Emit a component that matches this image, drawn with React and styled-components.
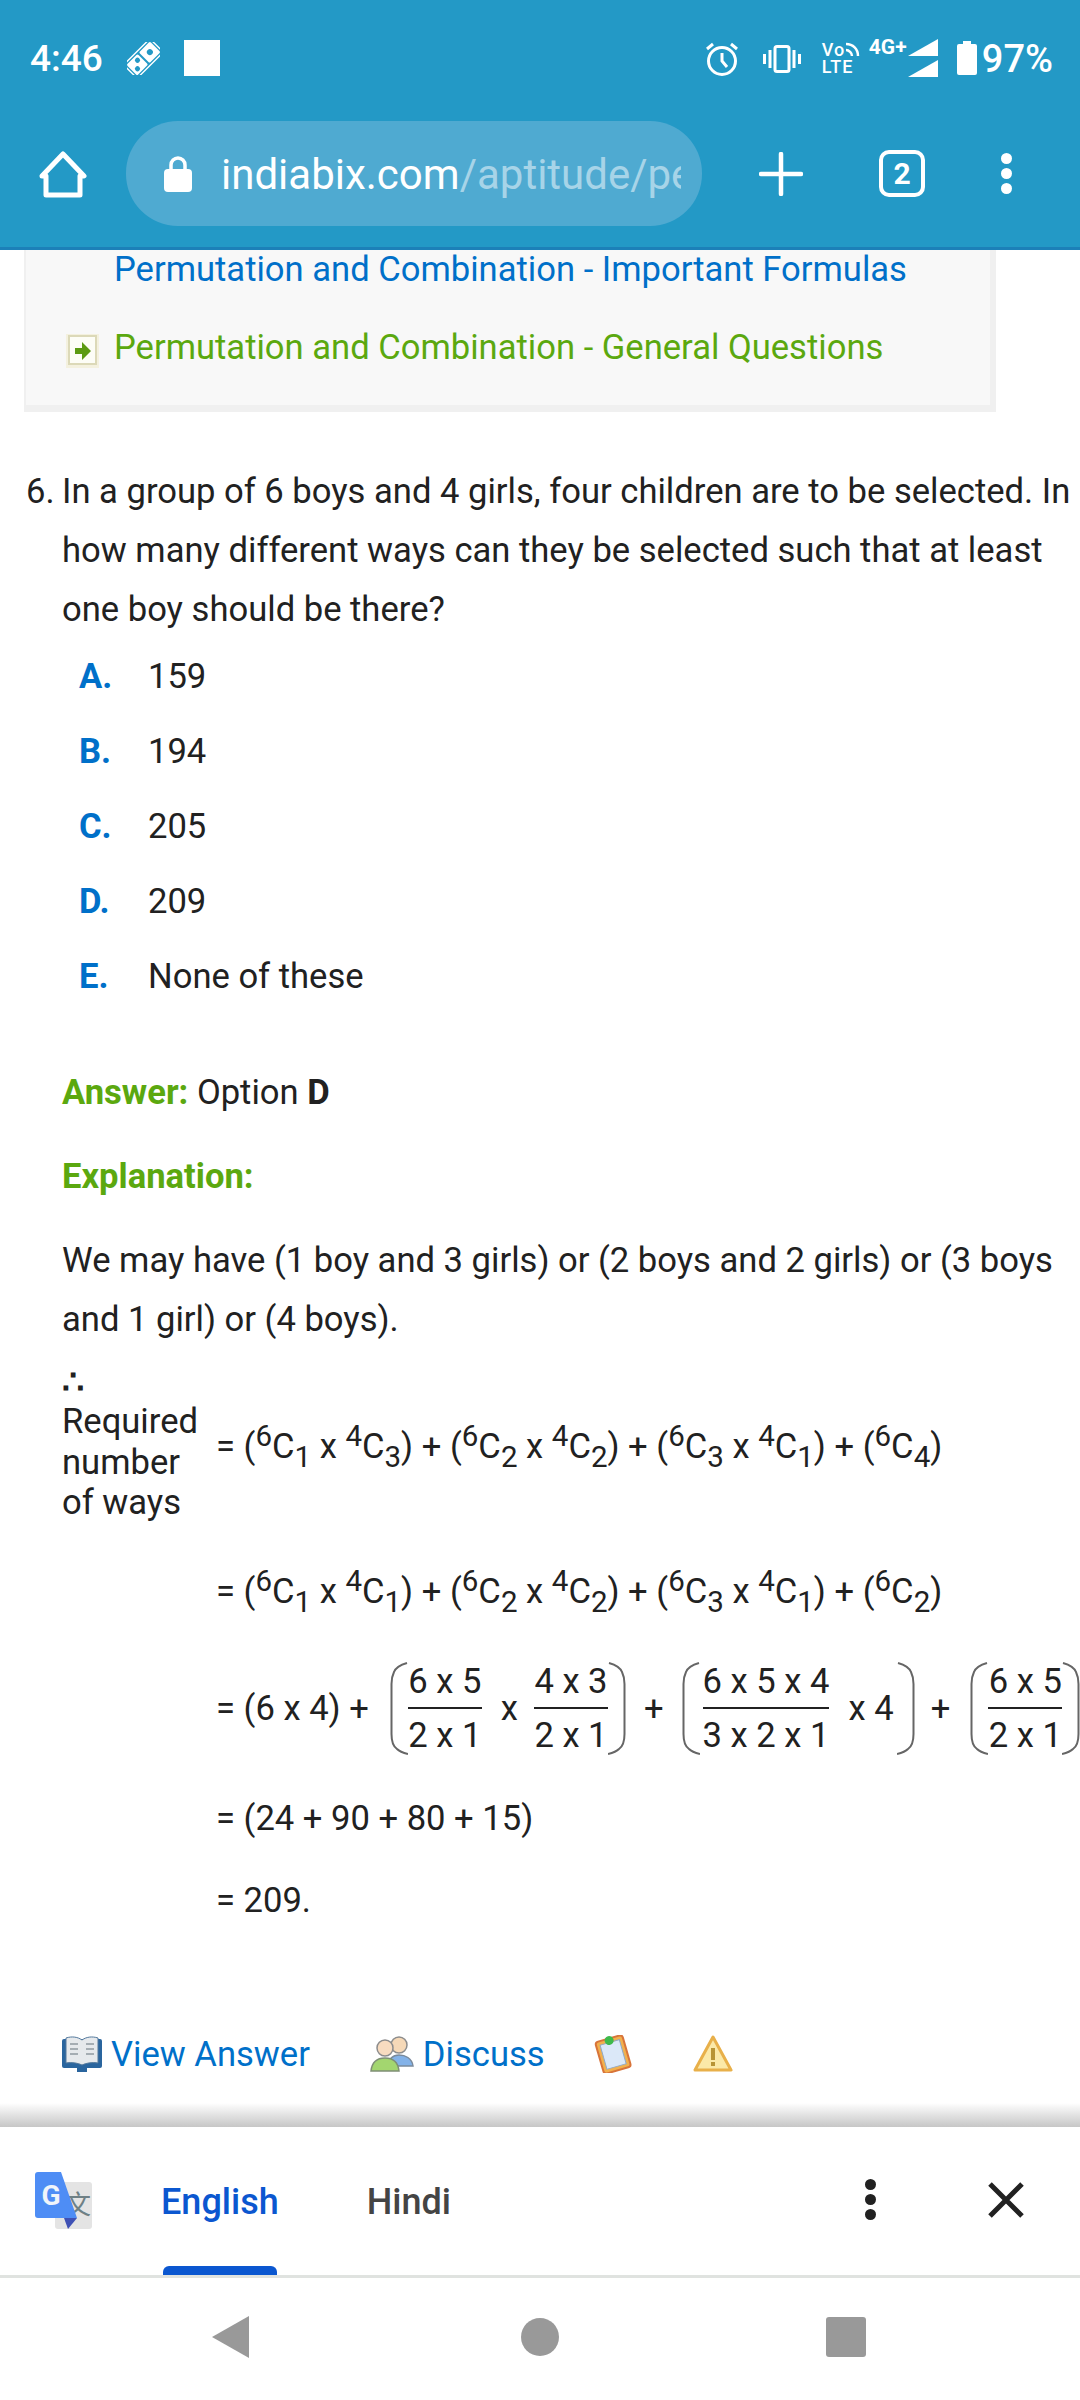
import React from "react"
import styled, { createGlobalStyle } from "styled-components"

const GlobalStyle = createGlobalStyle`
    html, body {
        margin: 0;
        padding: 0;
        background: #fff;
    }
    body {
        font-family: Roboto, "Liberation Sans", sans-serif;
    }
`

const Screen = styled.div`
    width: 1080px;
    height: 2400px;
    display: flex;
    flex-direction: column;
    overflow: hidden;
    background: #fff;
    color: #212121;
`

const TopBar = styled.header`
    height: 250px;
    flex: none;
    box-sizing: border-box;
    background: #2399c6;
    border-bottom: 3px solid #1c80b8;
    display: flex;
    flex-direction: column;
`

const StatusRow = styled.div`
    height: 121px;
    display: flex;
    align-items: flex-start;
    padding: 39px 27px 0 30px;
    box-sizing: border-box;
    color: #fff;
`

const Clock = styled.span`
    font-size: 37px;
    font-weight: 500;
    line-height: 40px;
    width: 97px;
`

const StatusBlock = styled.span`
    width: 36px;
    height: 36px;
    background: #fff;
    margin: 1px 0 0 24px;
`

const StatusRight = styled.div`
    margin-left: auto;
    display: flex;
    align-items: flex-start;
`

const VoLte = styled.span`
    width: 38px;
    margin-left: 21px;
    margin-top: 2px;
    font-size: 18px;
    font-weight: 500;
    line-height: 17px;
    letter-spacing: 1px;
    position: relative;
    display: block;
`

const WifiArc = styled.svg`
    position: absolute;
    right: 0;
    top: 1px;
`

const FourG = styled.span`
    font-size: 21px;
    font-weight: 700;
    line-height: 24px;
    margin-left: 9px;
    margin-top: -4px;
    width: 40px;
`

const Percent = styled.span`
    font-size: 38px;
    font-weight: 500;
    line-height: 40px;
    margin-left: 5px;
`

const ToolRow = styled.div`
    height: 105px;
    display: flex;
    align-items: center;
    position: relative;
`

const ToolSlot = styled.div`
    flex: none;
    width: ${(p) => p.$w}px;
    display: flex;
    justify-content: center;
    align-items: center;
`

const UrlPill = styled.div`
    width: 576px;
    height: 105px;
    box-sizing: border-box;
    flex: none;
    border-radius: 52px;
    background: #4faad1;
    display: flex;
    align-items: center;
    padding: 0 21px 0 38px;
    overflow: hidden;
`

const UrlText = styled.div`
    margin-left: 29px;
    margin-top: 2px;
    flex: 1;
    min-width: 0;
    overflow: hidden;
    white-space: nowrap;
    font-size: 42px;
    color: #a7d4e8;
    span {
        color: #fff;
    }
`

const TabCount = styled.div`
    width: 46px;
    height: 47px;
    box-sizing: border-box;
    border: 4px solid #fff;
    border-radius: 10px;
    color: #fff;
    font-size: 30px;
    font-weight: 700;
    display: flex;
    align-items: center;
    justify-content: center;
`

const Dots = styled.div`
    display: flex;
    flex-direction: column;
    gap: 4px;
    i {
        display: block;
        width: 11px;
        height: 11px;
        border-radius: 50%;
        background: ${(p) => p.$color};
    }
`

const Content = styled.main`
    flex: 1;
    min-height: 0;
    overflow: hidden;
    font-size: 34.6px;
    line-height: 59px;
`

const TopicPanel = styled.nav`
    width: 972px;
    height: 162px;
    margin-left: 24px;
    box-sizing: border-box;
    background: #f8f8f8;
    border-left: 2px solid #f0f0f0;
    border-right: 6px solid #f0f0f0;
    border-bottom: 7px solid #f0f0f0;
    padding-left: 40px;
`

const TopicLink = styled.div`
    height: ${(p) => (p.$green ? "78px" : "38px")};
    line-height: ${(p) => (p.$green ? "78px" : "38px")};
    margin-top: ${(p) => (p.$green ? "20px" : "0")};
    color: ${(p) => (p.$green ? "#5ba80f" : "#0070c9")};
    display: flex;
    align-items: center;
    padding-left: ${(p) => (p.$green ? "0" : "48px")};
    gap: 14px;
`

const Question = styled.div`
    margin: 50px 0 0 26px;
    display: flex;
    white-space: nowrap;
`

const QuestionNo = styled.span`
    width: 36px;
    flex: none;
`

const Options = styled.ul`
    list-style: none;
    margin: 0;
    padding: 0 0 0 79px;
`

const Option = styled.li`
    height: 75px;
    line-height: 75px;
    display: flex;
`

const OptionKey = styled.b`
    width: 69px;
    font-weight: 700;
    color: #0070c9;
`

const Block = styled.div`
    margin: ${(p) => p.$top}px 0 0 62px;
    white-space: nowrap;
`

const GreenBold = styled.b`
    color: #5ba80f;
    font-weight: 700;
`

const MathGrid = styled.div`
    margin: 12px 0 0 62px;
    display: grid;
    grid-template-columns: 154px max-content;
    grid-template-rows: 170px 121px 112px 108px 57px;
    align-items: center;
    white-space: nowrap;
    sup, sub {
        font-size: 29.5px;
        line-height: 0;
    }
    sup {
        vertical-align: 12px;
    }
    sub {
        vertical-align: -9px;
    }
`

const Because = styled.div`
    line-height: 40.5px;
    grid-row: 1;
    white-space: normal;
    width: 150px;
    margin-bottom: 2px;
`

const BecauseMark = styled.div`
    line-height: 30px;
    margin-bottom: 4px;
    font-weight: 700;
`

const Expr = styled.div`
    grid-column: 2;
    display: flex;
    align-items: center;
`

const Fraction = styled.span`
    display: flex;
    flex-direction: column;
    align-items: stretch;
    text-align: center;
    line-height: 52px;
    width: ${(p) => p.$w}px;
    margin-left: ${(p) => p.$ml || 0}px;
    span + span {
        border-top: 2px solid #212121;
    }
`

const Gap = styled.span`
    width: ${(p) => p.$w}px;
    flex: none;
`

const ActionRow = styled.div`
    margin: 105px 0 0 62px;
    height: 40px;
    display: flex;
    align-items: center;
    color: #0070c9;
    line-height: 40px;
`

const ActionIcon = styled.svg`
    flex: none;
    margin-left: ${(p) => p.$ml || 0}px;
    margin-right: ${(p) => p.$mr || 0}px;
`

const TranslateBar = styled.section`
    position: relative;
    flex: none;
    height: 151px;
    box-sizing: border-box;
    border-bottom: 3px solid #e0e3e0;
    background: #fff;
    display: flex;
    align-items: flex-start;
    &::before {
        content: "";
        position: absolute;
        left: 0;
        right: 0;
        top: -24px;
        height: 24px;
        background: linear-gradient(to bottom, rgba(200, 200, 200, 0), #c6c6c6);
    }
`

const LangLogo = styled.svg`
    margin: 45px 0 0 35px;
    flex: none;
`

const LangTab = styled.div`
    position: relative;
    height: 148px;
    margin-left: ${(p) => p.$ml}px;
    padding-top: 53px;
    box-sizing: border-box;
    font-size: 36px;
    font-weight: 500;
    line-height: 44px;
    color: ${(p) => (p.$active ? "#0b57d0" : "#444")};
    ${(p) =>
        p.$active &&
        `&::after {
            content: "";
            position: absolute;
            left: 2px;
            right: 2px;
            bottom: 0;
            height: 9px;
            background: #0b57d0;
            border-radius: 6px 6px 0 0;
        }`}
`

const BarActions = styled.div`
    margin-left: auto;
    margin-top: 52px;
    display: flex;
    align-items: center;
    padding-right: 56px;
    gap: 112px;
`

const NavBar = styled.nav`
    flex: none;
    height: 122px;
    display: flex;
    align-items: center;
    position: relative;
`

const NavSlot = styled.div`
    position: absolute;
    left: ${(p) => p.$x}px;
    top: ${(p) => p.$y}px;
`

const NavTriangle = styled.svg`
    display: block;
`

const NavCircle = styled.div`
    width: 38px;
    height: 38px;
    background: #999;
    border-radius: 50%;
`

const NavSquare = styled.div`
    width: 40px;
    height: 40px;
    background: #999;
    border-radius: 3px;
`

function DominoIcon() {
    return (
        <svg width="33" height="33" viewBox="0 0 33 33" style={{ marginTop: 3, flex: "none" }}>
            <g transform="rotate(45 16.5 16.5)">
                <rect x="7" y="-2" width="19" height="37" rx="3" fill="none" stroke="#fff" strokeWidth="1.4" />
                <rect x="9" y="0" width="15" height="15.5" rx="1.5" fill="#fff" />
                <rect x="9" y="17.5" width="15" height="15.5" rx="1.5" fill="#fff" />
                <circle cx="16.5" cy="7.5" r="3" fill="#2399c6" />
                <circle cx="13.5" cy="22" r="2.6" fill="#2399c6" />
                <circle cx="19.5" cy="28" r="2.6" fill="#2399c6" />
            </g>
        </svg>
    )
}

function AlarmIcon() {
    return (
        <svg width="32" height="34" viewBox="0 0 32 34" fill="none" stroke="#fff" strokeWidth="3" style={{ marginTop: 3 }}>
            <circle cx="16" cy="19" r="13.5" />
            <path d="M16 11v8l5 6" />
            <path d="M1 7l6-5M31 7l-6-5" />
        </svg>
    )
}

function VibrateIcon() {
    return (
        <svg width="38" height="28" viewBox="0 0 38 28" fill="none" stroke="#fff" style={{ marginLeft: 25, marginTop: 6 }}>
            <rect x="12" y="1.5" width="14" height="25" rx="2" strokeWidth="3" />
            <path d="M7 5v18M31 5v18" strokeWidth="3" />
            <path d="M1.5 9v10M36.5 9v10" strokeWidth="3" />
        </svg>
    )
}

function SignalIcon() {
    return (
        <svg width="31" height="38" viewBox="0 0 31 38" fill="#fff" style={{ marginLeft: -1 }}>
            <polygon points="0,17 30,0 30,17" />
            <polygon points="0,38 30,21 30,38" />
        </svg>
    )
}

function BatteryIcon() {
    return (
        <svg width="20" height="34" viewBox="0 0 20 34" fill="#fff" style={{ marginLeft: 18, marginTop: 2 }}>
            <rect x="6" y="0" width="8" height="4" />
            <rect x="0" y="3" width="20" height="31" rx="2" />
        </svg>
    )
}

function HomeIcon() {
    return (
        <svg width="48" height="48" viewBox="0 0 48 48" fill="none" stroke="#fff" strokeWidth="5" strokeLinejoin="round">
            <path d="M24 4 L45 26 H41 V45 H7 V26 H3 Z" />
        </svg>
    )
}

function LockIcon() {
    return (
        <svg width="28" height="36" viewBox="0 0 28 36" style={{ flex: "none" }}>
            <rect x="0" y="13" width="28" height="23" rx="4" fill="#fff" />
            <path d="M7 15V9a7 7 0 0 1 14 0v6" fill="none" stroke="#fff" strokeWidth="3.5" />
        </svg>
    )
}

function PlusIcon() {
    return (
        <svg width="44" height="44" viewBox="0 0 44 44" stroke="#fff" strokeWidth="4.5" strokeLinecap="round">
            <path d="M22 2v40M2 22h40" />
        </svg>
    )
}

function ArrowBullet() {
    return (
        <svg width="34" height="34" viewBox="0 0 34 34" style={{ flex: "none", marginTop: 8 }}>
            <rect x="0" y="0" width="33" height="34" fill="#f4f1df" />
            <rect x="3" y="2" width="27" height="28" fill="#fdfdf6" stroke="#dcd9b8" strokeWidth="2" />
            <path d="M9 14h7v-6l9 9-9 9v-6h-7z" fill="#5c9a12" />
        </svg>
    )
}

function Paren({ right }) {
    return (
        <svg width="18" height="93" viewBox="0 0 18 93" fill="none" stroke="#666" strokeWidth="2" style={{ flex: "none", transform: right ? "scaleX(-1)" : "none" }}>
            <path d="M17 1 C10 3 6 5 4 10 C2 14 1.5 18 1.5 22 V72 C1.5 80 4 85 7 87 C10 90 14 91 18 92" />
        </svg>
    )
}

function BookIcon() {
    return (
        <ActionIcon width="40" height="38" viewBox="0 0 40 38" $mr={9}>
            <rect x="0" y="4" width="40" height="29" rx="2" fill="#2a659e" />
            <path d="M4 3c6-2 12-1 16 2 4-3 10-4 16-2v25c-6-1-12 0-16 2-4-2-10-3-16-2z" fill="#e6e9ec" stroke="#52789c" />
            <path d="M8 9h8M8 14h8M8 19h8M24 9h8M24 14h8M24 19h8" stroke="#a5adb3" strokeWidth="2" />
            <rect x="15" y="33" width="10" height="4" fill="#2a659e" />
        </ActionIcon>
    )
}

function PeopleIcon() {
    return (
        <ActionIcon width="44" height="36" viewBox="0 0 44 36" $ml={60} $mr={9}>
            <circle cx="29" cy="9" r="8" fill="#f6d9b8" stroke="#8d8d8d" strokeWidth="1.5" />
            <path d="M18 30c1-8 5-11 11-11s13 3 14 11z" fill="#83b2e8" stroke="#7a8a9c" strokeWidth="1.5" />
            <circle cx="15" cy="12" r="8" fill="#f8dcc0" stroke="#8d8d8d" strokeWidth="1.5" />
            <path d="M1 35c1-9 6-13 14-13s13 4 14 13z" fill="#a3d66f" stroke="#7f8f75" strokeWidth="1.5" />
        </ActionIcon>
    )
}

function NoteIcon() {
    return (
        <ActionIcon width="40" height="38" viewBox="0 0 40 38" $ml={48}>
            <g transform="rotate(-16 20 19)">
                <rect x="6" y="3" width="28" height="33" rx="3" fill="#f2b04d" stroke="#d8743a" strokeWidth="2" />
                <rect x="10" y="7" width="20" height="25" fill="#dbe8f8" stroke="#8fa9c7" />
                <circle cx="20" cy="5" r="4.5" fill="#3fb94b" />
            </g>
        </ActionIcon>
    )
}

function WarnIcon() {
    return (
        <ActionIcon width="40" height="38" viewBox="0 0 40 38" $ml={60}>
            <path d="M20 2 L38 35 H2 Z" fill="#fbe9a8" stroke="#e8b04a" strokeWidth="3" strokeLinejoin="round" />
            <rect x="18" y="13" width="4" height="12" fill="#b89436" />
            <rect x="18" y="27" width="4" height="4" fill="#b89436" />
        </ActionIcon>
    )
}

function TranslateIcon() {
    return (
        <LangLogo width="58" height="58" viewBox="0 0 58 58">
            <rect x="20" y="10" width="37" height="47" rx="3" fill="#e4e4e4" />
            <text x="43" y="42" fontSize="26" fill="#6e8085" textAnchor="middle" fontFamily="Noto Sans CJK SC, sans-serif">文</text>
            <polygon points="29,46 42,46 33,57" fill="#3f51b5" />
            <path d="M3 0 H26 L42 46 H3 a3 3 0 0 1 -3 -3 V3 a3 3 0 0 1 3 -3z" fill="#4e8df5" />
            <text x="16" y="33" fontSize="28" fontWeight="700" fill="#f0f4fa" textAnchor="middle" fontFamily="Roboto, sans-serif">G</text>
        </LangLogo>
    )
}

function CloseIcon() {
    return (
        <svg width="36" height="36" viewBox="0 0 36 36" stroke="#212121" strokeWidth="5" style={{ display: "block" }}>
            <path d="M2 2l32 32M34 2L2 34" />
        </svg>
    )
}

const c = (pre, sub) => (
    <>
        <sup>{pre}</sup>C<sub>{sub}</sub>
    </>
)

const options = [
    ["A.", "159"],
    ["B.", "194"],
    ["C.", "205"],
    ["D.", "209"],
    ["E.", "None of these"],
]

export default function App() {
    return (
        <Screen>
            <GlobalStyle />
            <TopBar>
                <StatusRow>
                    <Clock>4:46</Clock>
                    <DominoIcon />
                    <StatusBlock />
                    <StatusRight>
                        <AlarmIcon />
                        <VibrateIcon />
                        <VoLte>
                            Vo
                            <WifiArc width="14" height="14" viewBox="0 0 14 14" fill="none" stroke="#fff" strokeWidth="2.5">
                                <path d="M0 2c7 0 12 5 12 12M0 8c3 0 6 3 6 6" />
                            </WifiArc>
                            <br />
                            LTE
                        </VoLte>
                        <FourG>4G+</FourG>
                        <SignalIcon />
                        <BatteryIcon />
                        <Percent>97%</Percent>
                    </StatusRight>
                </StatusRow>
                <ToolRow>
                    <ToolSlot $w={126}>
                        <HomeIcon />
                    </ToolSlot>
                    <UrlPill>
                        <LockIcon />
                        <UrlText>
                            <span>indiabix.com</span>/aptitude/pe
                        </UrlText>
                    </UrlPill>
                    <ToolSlot $w={158}>
                        <PlusIcon />
                    </ToolSlot>
                    <ToolSlot $w={84}>
                        <TabCount>2</TabCount>
                    </ToolSlot>
                    <ToolSlot $w={124}>
                        <Dots $color="#fff">
                            <i />
                            <i />
                            <i />
                        </Dots>
                    </ToolSlot>
                </ToolRow>
            </TopBar>

            <Content>
                <TopicPanel>
                    <TopicLink>Permutation and Combination - Important Formulas</TopicLink>
                    <TopicLink $green>
                        <ArrowBullet />
                        Permutation and Combination - General Questions
                    </TopicLink>
                </TopicPanel>

                <Question>
                    <QuestionNo>6.</QuestionNo>
                    <div>
                        In a group of 6 boys and 4 girls, four children are to be selected. In
                        <br />
                        how many different ways can they be selected such that at least
                        <br />
                        one boy should be there?
                    </div>
                </Question>

                <Options>
                    {options.map(([key, value]) => (
                        <Option key={key}>
                            <OptionKey>{key}</OptionKey>
                            {value}
                        </Option>
                    ))}
                </Options>

                <Block $top={49}>
                    <GreenBold>Answer:</GreenBold> Option <b>D</b>
                </Block>
                <Block $top={25}>
                    <GreenBold>Explanation:</GreenBold>
                </Block>
                <Block $top={25}>
                    We may have (1 boy and 3 girls) or (2 boys and 2 girls) or (3 boys
                    <br />
                    and 1 girl) or (4 boys).
                </Block>

                <MathGrid>
                    <Because>
                        <BecauseMark>∴</BecauseMark>
                        Required number of ways
                    </Because>
                    <Expr>
                        <span>
                            = ({c(6, 1)} x {c(4, 3)}) + ({c(6, 2)} x {c(4, 2)}) + ({c(6, 3)} x {c(4, 1)}) + ({c(6, 4)})
                        </span>
                    </Expr>
                    <Expr>
                        <span>
                            = ({c(6, 1)} x {c(4, 1)}) + ({c(6, 2)} x {c(4, 2)}) + ({c(6, 3)} x {c(4, 1)}) + ({c(6, 2)})
                        </span>
                    </Expr>
                    <Expr>
                        <span>= (6 x 4) +</span>
                        <Gap $w={21} />
                        <Paren />
                        <Fraction $w={74}>
                            <span>6 x 5</span>
                            <span>2 x 1</span>
                        </Fraction>
                        <Gap $w={19} />
                        <span>x</span>
                        <Gap $w={16} />
                        <Fraction $w={74}>
                            <span>4 x 3</span>
                            <span>2 x 1</span>
                        </Fraction>
                        <Paren right />
                        <Gap $w={18} />
                        <span>+</span>
                        <Gap $w={18} />
                        <Paren />
                        <Fraction $w={126} $ml={3}>
                            <span>6 x 5 x 4</span>
                            <span>3 x 2 x 1</span>
                        </Fraction>
                        <Gap $w={20} />
                        <span>x 4</span>
                        <Gap $w={3} />
                        <Paren right />
                        <Gap $w={16} />
                        <span>+</span>
                        <Gap $w={20} />
                        <Paren />
                        <Fraction $w={74}>
                            <span>6 x 5</span>
                            <span>2 x 1</span>
                        </Fraction>
                        <Paren right />
                    </Expr>
                    <Expr>
                        <span>= (24 + 90 + 80 + 15)</span>
                    </Expr>
                    <Expr>
                        <span>= 209.</span>
                    </Expr>
                </MathGrid>

                <ActionRow>
                    <BookIcon />
                    View Answer
                    <PeopleIcon />
                    Discuss
                    <NoteIcon />
                    <WarnIcon />
                </ActionRow>
            </Content>

            <TranslateBar>
                <TranslateIcon />
                <LangTab $active $ml={68}>English</LangTab>
                <LangTab $ml={88}>Hindi</LangTab>
                <BarActions>
                    <Dots $color="#212121">
                        <i />
                        <i />
                        <i />
                    </Dots>
                    <CloseIcon />
                </BarActions>
            </TranslateBar>

            <NavBar>
                <NavSlot $x={212} $y={38}>
                    <NavTriangle width="37" height="42" viewBox="0 0 37 42" fill="#999">
                        <path d="M37 0V42L0 21Z" />
                    </NavTriangle>
                </NavSlot>
                <NavSlot $x={521} $y={40}>
                    <NavCircle />
                </NavSlot>
                <NavSlot $x={826} $y={39}>
                    <NavSquare />
                </NavSlot>
            </NavBar>
        </Screen>
    )
}
